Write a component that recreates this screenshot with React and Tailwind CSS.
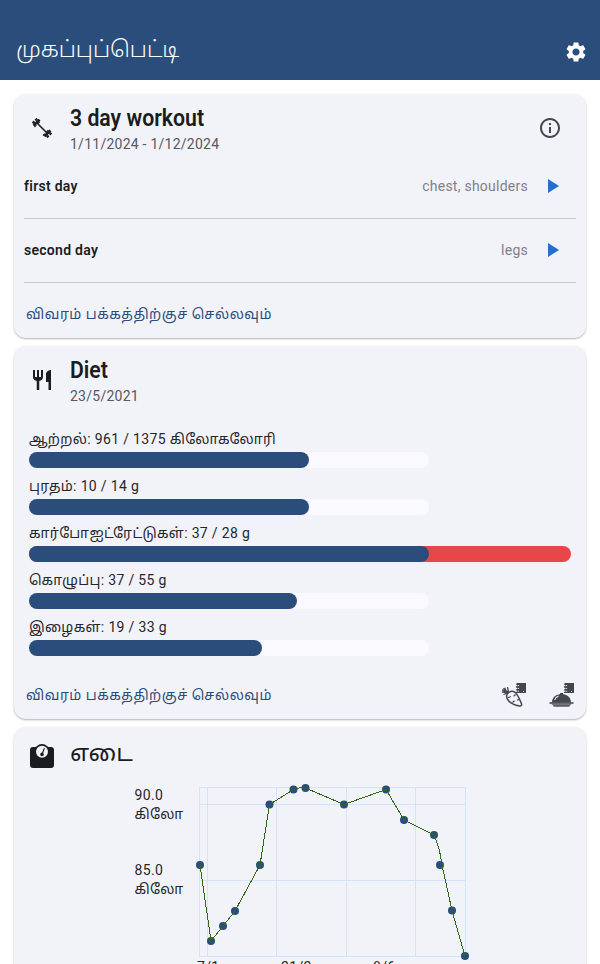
import { MdSettings, MdInfoOutline, MdPlayArrow, MdRestaurant } from "react-icons/md";

const link = "விவரம் பக்கத்திற்குச் செல்லவும்";

function Card({ className, children }) {
  return (
    <section className={`rounded-xl bg-[#f2f3f9] shadow-[0_1px_2px_rgba(0,0,0,0.3)] ${className}`}>
      {children}
    </section>
  );
}

function Title({ children }) {
  return (
    <h2 className="flex h-8 items-center text-[24px] font-semibold whitespace-nowrap text-[#191c20]">
      <span className="origin-left scale-x-[0.885]">{children}</span>
    </h2>
  );
}

function Dumbbell() {
  return (
    <svg className="size-6" viewBox="0 0 24 24" fill="none" stroke="#191c20">
      <path d="M6 6l12 12" strokeWidth="1.6" />
      <path d="M3.6 9.6L9.6 3.6M14.4 20.4L20.4 14.4" strokeWidth="2.6" />
      <path d="M2.6 7.2L7.2 2.6M16.8 21.4L21.4 16.8" strokeWidth="2.2" strokeDasharray="2.6 1.3" />
      <path d="M4.5 11L11 4.5M13 19.5L19.5 13" strokeWidth="1.2" strokeDasharray="2.6 2.2" />
    </svg>
  );
}

function Scale() {
  return (
    <svg className="size-6" viewBox="0 0 24 24">
      <rect y="3" width="24" height="21" rx="3" fill="#191c20" />
      <circle cx="12" cy="7.5" r="7.5" fill="#191c20" />
      <circle cx="12" cy="7.8" r="6" fill="#f2f3f9" />
      <path d="M14.2 4.6L12.6 8.8" stroke="#191c20" strokeWidth="1.2" strokeLinecap="round" />
      <circle cx="12" cy="10.4" r="1.8" fill="#191c20" />
    </svg>
  );
}

function Notebook() {
  return (
    <>
      <path d="M16 0h9v10h-9z" fill="#43474e" />
      <path d="M15 1.2h3M15 4h3M15 6.8h3M15 9.4h3" stroke="#43474e" strokeWidth="1.3" />
      <path d="M16.5 2.6h1.6M16.5 5.4h1.6M16.5 8.2h1.6M22 8.5h1" stroke="#f2f3f9" strokeWidth="0.9" />
    </>
  );
}

function Carrot() {
  return (
    <svg className="h-[26px] w-[26px]" viewBox="0 0 26 26" fill="none">
      <path
        d="M5.8 12C6.5 9.8 9.500 7.700 12.500 8.500c3.500 1 6 7 8 12.200.6 1.500-.5 2.600-2 2.300-4-.6-8.700-2.800-10.900-5.300C6 15.900 5.300 13.800 5.800 12z"
        stroke="#43474e"
        strokeWidth="1.5"
      />
      <path d="M7.500 9.500L2 5.500M7 9.500L.8 9.200M7.500 9L6.500 4.200M7 9.800L2.500 11.500M4.500 7.200L3.800 4.800M4.500 8.300L1 7.200" stroke="#43474e" strokeWidth="1.3" />
      <path d="M7 14.800l2.800-1.300M11.500 19.500l2-1.800M14.500 11.500l-1.800 1.700M18.500 16.500l-2.500.6" stroke="#43474e" strokeWidth="1.2" />
      <Notebook />
    </svg>
  );
}

function Cloche() {
  return (
    <svg className="h-[26px] w-[26px]" viewBox="0 0 26 26" fill="none">
      <path d="M3 19.500C3 14.500 6.500 11.800 11 11.300V10h3v1.300c4.500.5 8 3.200 8 8.200z" fill="#43474e" />
      <path d="M5.700 17c.5-2.200 1.800-3.400 3.800-4.100" stroke="#f2f3f9" strokeWidth="1.1" />
      <path d="M.5 20h24" stroke="#43474e" strokeWidth="1.6" />
      <path d="M2.500 21h20l-2.500 2.500h-15z" fill="#74777d" />
      <path d="M4.500 23h16" stroke="#43474e" strokeWidth="1" />
      <Notebook />
    </svg>
  );
}

function WorkoutRow({ name, detail }) {
  return (
    <div className="mx-2.5 flex h-16 items-center justify-between border-b border-[#c3c6cf] text-[14px]">
      <span className="font-semibold tracking-[0.28px] text-[#191c20]">{name}</span>
      <div className="flex items-center gap-3 pr-3">
        <span className="tracking-[0.25px] text-[#808186]">{detail}</span>
        <MdPlayArrow className="-mt-px size-6 text-[#266dd3]" />
      </div>
    </div>
  );
}

function Gauge({ label, value, over }) {
  return (
    <div className="h-[47px]">
      <div className="h-[23px] text-[14px] leading-[21px] tracking-[0.33px] whitespace-nowrap text-[#24272b]">{label}</div>
      <div className={over ? "h-4 w-[542px] rounded-[8px] bg-[#e84749]" : "h-4 w-[400px] rounded-[8px] bg-[#f9f9ff]"}>
        <div className="h-4 rounded-[8px] bg-[#2a4d7c]" style={{ width: value }} />
      </div>
    </div>
  );
}

const points = [
  [66, 90], [77, 166], [89, 151], [101, 136], [126, 90], [135.5, 29.5], [159.5, 14.5],
  [171.5, 13], [210, 29.5], [252, 14.5], [270, 45], [300, 60], [306, 90], [318, 135.5], [331, 181],
];

function WeightChart() {
  return (
    <div className="relative mx-auto h-[214px] w-[332px] text-[14px] leading-[19px] tracking-[0.35px] text-[#24272b]">
      <svg className="absolute top-0 left-0" width="340" height="200" viewBox="0 0 340 200" fill="none">
        <path d="M65.5 12.5h266v169h-266zM65.5 29.5h266M65.5 105.5h266M73.5 12.5v169M142.5 12.5v169M212.5 12.5v169M281.5 12.5v169" stroke="#d3e3fa" />
        {points.map(([x, y]) => <circle key={x} cx={x} cy={y} r="4" fill="#2a4d7c" />)}
        <path d="M66 90L77 166L89 151L101 136L126 90L135.5 29.5L159.5 14.5Q165 12 171.5 13L210 29.5L252 14.5L270 45L300 60Q306 73 308 90L318 135.5L331 181" stroke="#306a16" strokeWidth="1" shapeRendering="crispEdges" />
      </svg>
      <div className="absolute top-[11px] left-[0.5px] w-[60px]">90.0<br />கிலோ</div>
      <div className="absolute top-[86px] left-[0.5px] w-[60px]">85.0<br />கிலோ</div>
      <div className="absolute top-[183px] left-[63px]">7/1</div>
      <div className="absolute top-[183px] left-[147px]">21/2</div>
      <div className="absolute top-[183px] left-[239px]">8/6</div>
    </div>
  );
}

export default function App() {
  return (
    <div className="h-[964px] w-[600px] overflow-hidden bg-white font-['Roboto','Noto_Sans_Tamil','Noto_Sans',sans-serif]">
      <header className="flex h-20 items-end justify-between bg-[#2a4d7c] pr-3 pl-4 text-white">
        <h1 className="pb-[14px] text-[22.7px] leading-8 font-light">முகப்புப்பெட்டி</h1>
        <MdSettings className="mb-4 size-6" />
      </header>
      <main className="flex flex-col gap-2 px-3.5 pt-3.5">
        <Card className="h-[244px]">
          <div className="flex h-[61px] items-start pt-2 pr-6 pl-4">
            <div className="pt-3.5"><Dumbbell /></div>
            <div className="ml-4 grow">
              <Title>3 day workout</Title>
              <p className="text-[14px] leading-5 tracking-[0.25px] text-[#55585e]">1/11/2024 - 1/12/2024</p>
            </div>
            <MdInfoOutline className="mt-3.5 size-6 text-[#43474e]" />
          </div>
          <WorkoutRow name="first day" detail="chest, shoulders" />
          <WorkoutRow name="second day" detail="legs" />
          <div className="px-3 pt-[21px] text-[14px] leading-5 tracking-[0.5px] whitespace-nowrap text-[#2a4d7c]">{link}</div>
        </Card>
        <Card className="h-[373px]">
          <div className="flex h-[80px] items-start pt-2 pl-4">
            <MdRestaurant className="mt-3.5 size-6 text-[#191c20]" />
            <div className="ml-4">
              <Title>Diet</Title>
              <p className="text-[14px] leading-5 tracking-[0.25px] text-[#55585e]">23/5/2021</p>
            </div>
          </div>
          <div className="px-[15px] pt-[3px]">
            <Gauge label="ஆற்றல்: 961 / 1375 கிலோகலோரி" value={280} />
            <Gauge label="புரதம்: 10 / 14 g" value={280} />
            <Gauge label="கார்போஐட்ரேட்டுகள்: 37 / 28 g" value={400} over />
            <Gauge label="கொழுப்பு: 37 / 55 g" value={268} />
            <Gauge label="இழைகள்: 19 / 33 g" value={233} />
          </div>
          <div className="flex items-start justify-between pt-[19px] pr-[11px] pl-3">
            <div className="pt-[2px] text-[14px] leading-5 tracking-[0.5px] whitespace-nowrap text-[#2a4d7c]">{link}</div>
            <div className="flex gap-[22px]"><Carrot /><Cloche /></div>
          </div>
        </Card>
        <Card className="h-[260px]">
          <div className="flex h-[48px] items-start pt-[17px] pl-4">
            <Scale />
            <h2 className="ml-4 -mt-[7px] text-[24px] leading-8 font-normal text-[#191c20]">எடை</h2>
          </div>
          <WeightChart />
        </Card>
      </main>
    </div>
  );
}
